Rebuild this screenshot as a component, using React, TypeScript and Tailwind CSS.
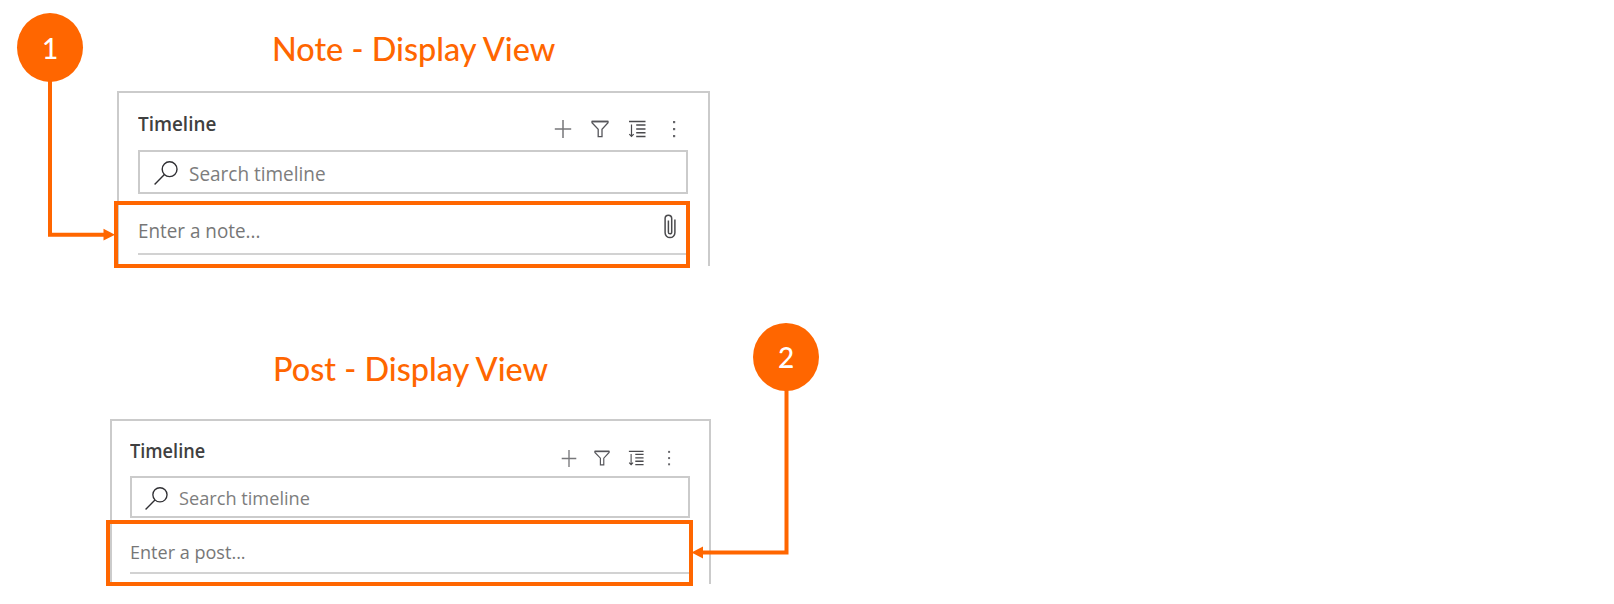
import type { ReactNode } from "react";

const segoe = "font-['Open_Sans','Noto_Sans',sans-serif]";
const calibri = "font-['Lato','Open_Sans',sans-serif]";

function PlusIcon({ className }: { className: string }) {
  return (
    <svg viewBox="0 0 18 18" className={className} preserveAspectRatio="none" fill="none" stroke="#77777a" strokeWidth="1.5">
      <path d="M9 0v18M0.8 9h16.4" />
    </svg>
  );
}

function FilterIcon({ className }: { className: string }) {
  return (
    <svg viewBox="0 0 18 18" className={className} fill="none" stroke="#55555a" strokeWidth="1.3">
      <path d="M1 1.4h16v1.4L11 9.2v7.5H7.2V9.2L1 2.8z" />
      <path d="M1 1.6h16" strokeWidth="1.7" />
    </svg>
  );
}

function SortIcon({ className }: { className: string }) {
  return (
    <svg viewBox="0 0 18 18" className={className} fill="none" stroke="#4a4a4d" strokeWidth="1.5">
      <path d="M1 1.5h16.5M8.2 5h9.3M8.2 8.9h9.3M8.2 12.7h9.3M8.2 16.5h9.3" />
      <path d="M3.5 4.5v12M1.3 14.2l2.2 2.3 2.2-2.3" strokeWidth="1.2" />
    </svg>
  );
}

function MoreIcon({ className }: { className: string }) {
  return (
    <svg viewBox="0 0 18 18" className={className} fill="#66666a">
      <rect x="8" y="1" width="2.2" height="2.2" />
      <rect x="8" y="8" width="2.2" height="2.2" />
      <rect x="8" y="15" width="2.2" height="2.2" />
    </svg>
  );
}

function SearchIcon({ className }: { className: string }) {
  return (
    <svg viewBox="0 0 24 24" className={className} fill="none" stroke="#2f2f33" strokeWidth="1.4">
      <circle cx="15.6" cy="8.2" r="7.4" />
      <path d="M10.4 13.6L0.6 23.4" />
    </svg>
  );
}

function ClipIcon({ className }: { className: string }) {
  return (
    <svg viewBox="0 0 12 25" className={className} fill="none" stroke="#4a4a4d" strokeWidth="1.5">
      <path d="M10.9 5.5v13.2a4.9 4.9 0 0 1-9.8 0V4.6a3.3 3.3 0 0 1 6.6 0v13.6a1.6 1.6 0 0 1-3.3 0V6.5" />
    </svg>
  );
}

function NotePanel() {
  return (
    <section className="ml-[117px] mt-[22px] h-[175px] w-[593px] border-x-2 border-t-2 border-[#cbcbcb]">
      <header className="flex h-[57px] w-[564px] justify-between pl-[19px]">
        <h2 className="mt-[17px] origin-left scale-x-[0.945] text-[20px] font-semibold leading-7 text-[#404040]">Timeline</h2>
        <div className="mt-[27px] flex h-[18px] gap-[19px]">
          <PlusIcon className="h-[18px] w-[18px]" />
          <FilterIcon className="h-[18px] w-[18px]" />
          <SortIcon className="h-[18px] w-[18px]" />
          <MoreIcon className="h-[18px] w-[18px]" />
        </div>
      </header>
      <div className="ml-[19px] flex h-[44px] w-[550px] border-2 border-[#cbcbcb] pl-[14px]">
        <SearchIcon className="mt-[9px] h-6 w-6" />
        <span className="ml-[11px] mt-[8px] origin-left scale-x-[0.948] whitespace-nowrap text-[20px] leading-7 text-[#7d7d7d]">Search timeline</span>
      </div>
      <div className="-ml-[5px] mt-[7px] h-[67px] w-[576px] border-4 border-[#ff6600] pl-5">
        <div className="flex h-[48px] justify-between pr-[10px]">
          <span className="mt-[12px] origin-left scale-x-[0.943] whitespace-nowrap text-[20px] leading-7 text-[#777777]">Enter a note...</span>
          <ClipIcon className="mt-[9px] h-[25px] w-3" />
        </div>
        <div className="h-[2px] bg-[#d2d2d2]" />
      </div>
    </section>
  );
}

function PostPanel() {
  return (
    <section className="ml-[110px] mt-[30px] h-[165px] w-[601px] border-x-2 border-t-2 border-[#cbcbcb]">
      <header className="flex h-[55px] w-[565px] justify-between pl-[18px]">
        <h2 className="mt-[16px] origin-left scale-x-[0.955] text-[19px] font-semibold leading-7 text-[#404040]">Timeline</h2>
        <div className="mt-[29px] flex h-[17px] gap-[17.5px]">
          <PlusIcon className="h-[17px] w-4" />
          <FilterIcon className="h-4 w-4" />
          <SortIcon className="h-4 w-4" />
          <MoreIcon className="h-4 w-4" />
        </div>
      </header>
      <div className="ml-[18px] flex h-[42px] w-[560px] border-2 border-[#cbcbcb] pl-[13px]">
        <SearchIcon className="mt-[9px] h-[23px] w-[23px]" />
        <span className="ml-[11px] mt-[6px] origin-left scale-x-[0.957] whitespace-nowrap text-[19px] leading-7 text-[#7d7d7d]">Search timeline</span>
      </div>
      <div className="-ml-[6px] mt-[2px] h-[66px] w-[587px] border-4 border-[#ff6600] pl-5">
        <div className="flex h-[48px]">
          <span className="mt-[14px] origin-left scale-x-[0.95] whitespace-nowrap text-[19px] leading-7 text-[#777777]">Enter a post...</span>
        </div>
        <div className="h-[2px] bg-[#d2d2d2]" />
      </div>
    </section>
  );
}

function Badge({ className, children }: { className: string; children: ReactNode }) {
  return (
    <div className={`${calibri} absolute flex w-[66px] items-center justify-center rounded-[50%] bg-[#ff6600] text-[28px] font-medium leading-none text-white ${className}`}>
      {children}
    </div>
  );
}

export default function App() {
  return (
    <main className={`${segoe} relative flex h-[604px] w-[1614px] flex-col overflow-hidden bg-white`}>
      <h1 className={`${calibri} ml-[272px] mt-[29px] h-10 origin-left scale-x-[1.013] self-start whitespace-nowrap text-[32px] font-medium leading-10 text-[#ff6600]`}>
        Note - Display View
      </h1>
      <NotePanel />
      <h1 className={`${calibri} ml-[273px] mt-[83px] h-10 origin-left scale-x-[1.013] self-start whitespace-nowrap text-[32px] font-medium leading-10 text-[#ff6600]`}>
        Post - Display View
      </h1>
      <PostPanel />

      <svg className="absolute left-[48px] top-[80px] h-[162px] w-[68px]" viewBox="48 80 68 162">
        <path d="M50 80V234.8H104" fill="none" stroke="#ff6600" strokeWidth="4" />
        <path d="M103.5 228.8L115 234.7L103.5 240.6z" fill="#ff6600" />
      </svg>
      <Badge className="left-[17px] top-[13px] h-[69px]">1</Badge>

      <svg className="absolute left-[690px] top-[388px] h-[172px] w-[100px]" viewBox="690 388 100 172">
        <path d="M786.5 388V552.6H702" fill="none" stroke="#ff6600" strokeWidth="4" />
        <path d="M703 546.6L691.5 552.6L703 558.6z" fill="#ff6600" />
      </svg>
      <Badge className="left-[753px] top-[323px] h-[68px]">2</Badge>
    </main>
  );
}
